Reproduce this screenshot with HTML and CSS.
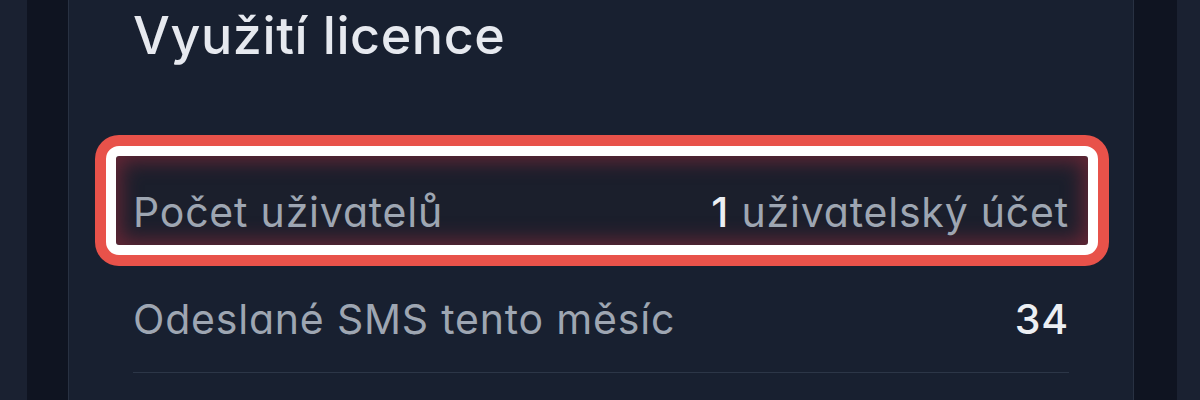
FILE: index.html
```html
<!DOCTYPE html>
<html lang="cs">
<head>
<meta charset="utf-8">
<title>Využití licence</title>
<link rel="stylesheet" href="styles.css">
</head>
<body>
<div class="page">
  <div class="edge edge-outer"></div>
  <div class="edge edge-dark"></div>
  <section class="card">
    <h2 class="card-title">Využití licence</h2>
    <div class="rows">
      <div class="row row-highlight">
        <div class="highlight"></div>
        <span class="label">Počet uživatelů</span>
        <span class="value"><span class="num">1</span> uživatelský účet</span>
      </div>
      <div class="row">
        <span class="label">Odeslané SMS tento měsíc</span>
        <span class="value"><span class="num">34</span></span>
      </div>
    </div>
  </section>
  <div class="edge edge-dark edge-right"></div>
  <div class="edge edge-outer edge-right-outer"></div>
</div>
</body>
</html>
```

FILE: styles.css
```css
html, body {
  margin: 0;
  padding: 0;
  height: 100%;
  background: #1a2030;
  overflow: hidden;
}

.page {
  display: flex;
  height: 400px;
  font-family: "Inter", "Noto Sans", sans-serif;
  font-feature-settings: "cv11" 1;
}

.edge-outer {
  width: 27px;
  flex: 0 0 27px;
  background: #1a2131;
}

.edge-dark {
  width: 41px;
  flex: 0 0 41px;
  background: #0f1421;
}

.edge-right {
  flex-basis: 43px;
  width: 43px;
}

.edge-right-outer {
  flex-basis: 23px;
  width: 23px;
}

.card {
  flex: 1;
  background: #182030;
  border-left: 1px solid #283142;
  border-right: 1px solid #283142;
  padding: 5px 64px 0 64px;
}

.card-title {
  margin: 0 0 92px 0;
  font-size: 52px;
  line-height: 62px;
  font-weight: 500;
  color: #e6e9ef;
  letter-spacing: 0.6px;
}

.rows {
  display: flex;
  flex-direction: column;
}

.row {
  position: relative;
  display: flex;
  justify-content: space-between;
  align-items: center;
  padding: 28px 0;
  line-height: 50px;
  font-size: 41px;
  letter-spacing: 0.8px;
  border-bottom: 1px solid #2c3647;
}

.row > span {
  position: relative;
  z-index: 1;
}

.label {
  color: #9ea6b2;
}

.value {
  color: #9ea6b2;
}

.num {
  color: #eceff3;
  font-weight: 500;
}

.highlight {
  position: absolute;
  z-index: 0;
  top: -13px;
  left: -27px;
  right: -29px;
  bottom: 10px;
  border: 10px solid #ffffff;
  border-radius: 13px;
  background: #1b1f2c;
  box-shadow: 0 0 0 11px #e8524a, inset 0 0 20px 5px rgba(120, 40, 55, 0.8);
}
```
